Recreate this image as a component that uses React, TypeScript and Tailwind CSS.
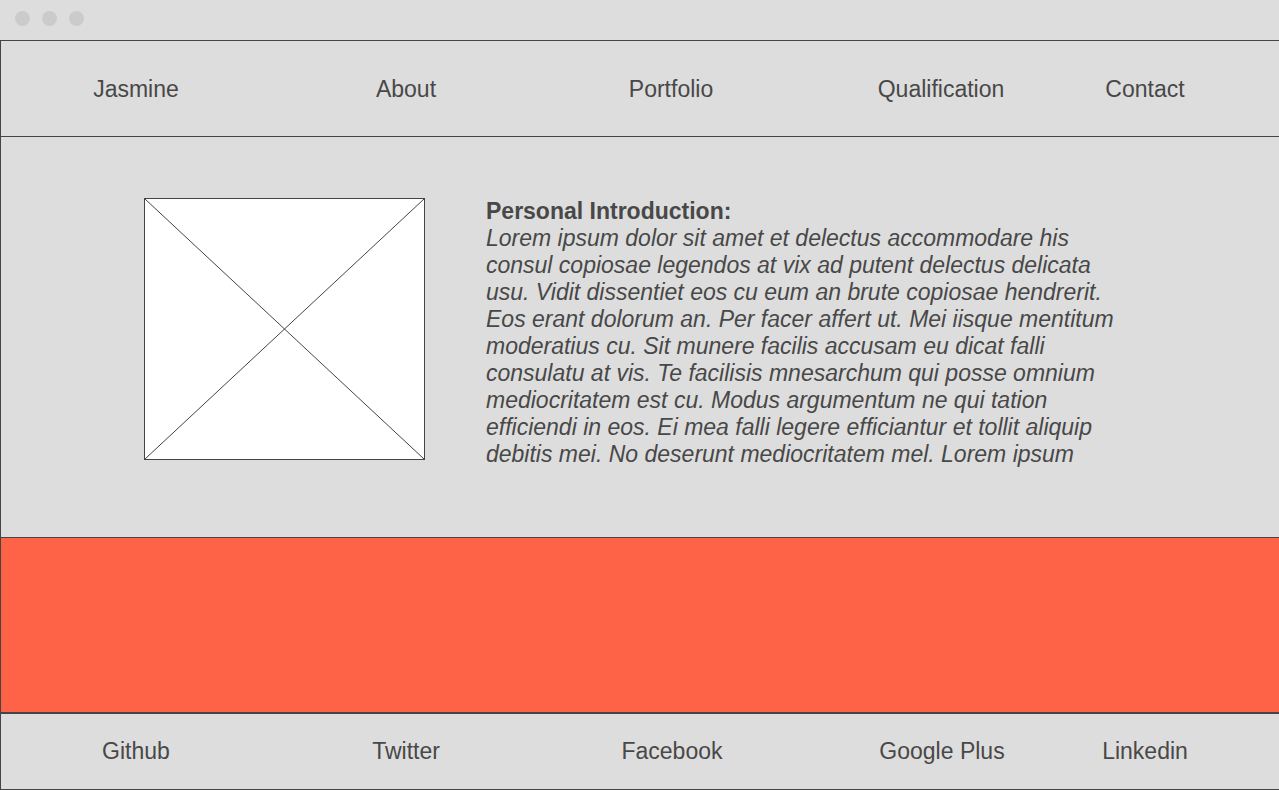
const navItems = [
  { label: 'Jasmine', w: 'w-[270px]' },
  { label: 'About', w: 'w-[270px]' },
  { label: 'Portfolio', w: 'w-[260px]' },
  { label: 'Qualification', w: 'w-[280px]' },
  { label: 'Contact', w: 'w-[128px]' },
]

const footerItems = [
  { label: 'Github', w: 'w-[270px]' },
  { label: 'Twitter', w: 'w-[270px]' },
  { label: 'Facebook', w: 'w-[262px]' },
  { label: 'Google Plus', w: 'w-[278px]' },
  { label: 'Linkedin', w: 'w-[128px]' },
]

function ImagePlaceholder() {
  return (
    <div className="w-[281px] h-[262px] shrink-0 border border-[#444] bg-white">
      <svg className="w-full h-full block" viewBox="0 0 279 260" preserveAspectRatio="none">
        <line x1="0" y1="0" x2="279" y2="260" stroke="#444" strokeWidth="1" />
        <line x1="279" y1="0" x2="0" y2="260" stroke="#444" strokeWidth="1" />
      </svg>
    </div>
  )
}

export default function App() {
  return (
    <div className="w-[1279px] h-[790px] bg-[#dddddd] flex flex-col text-[#484848] font-['Liberation_Sans',Arial,sans-serif] overflow-hidden">
      {/* window chrome */}
      <div className="h-10 shrink-0 flex items-start gap-[12px] pl-[15px] pt-[11px]">
        <span className="w-[15px] h-[15px] rounded-full bg-[#cbcbcb]" />
        <span className="w-[15px] h-[15px] rounded-full bg-[#cbcbcb]" />
        <span className="w-[15px] h-[15px] rounded-full bg-[#cbcbcb]" />
      </div>

      <div className="flex-1 flex flex-col border-t border-l border-b border-[#444] min-h-0">
        <nav className="h-[96px] shrink-0 flex items-center pt-[2px] border-b border-[#444] text-[23px]">
          {navItems.map((item) => (
            <div key={item.label} className={`${item.w} text-center`}>
              {item.label}
            </div>
          ))}
        </nav>

        <section className="h-[401px] shrink-0 border-b border-[#444] flex items-start pt-[61px] pl-[143px] gap-[61px]">
          <ImagePlaceholder />
          <div className="w-[640px] text-[23px] leading-[27px]">
            <p className="font-bold">Personal Introduction:</p>
            <p className="italic">
              Lorem ipsum dolor sit amet et delectus accommodare his consul copiosae legendos at vix ad putent
              delectus delicata usu. Vidit dissentiet eos cu eum an brute copiosae hendrerit. Eos erant dolorum
              an. Per facer affert ut. Mei iisque mentitum moderatius cu. Sit munere facilis accusam eu dicat
              falli consulatu at vis. Te facilisis mnesarchum qui posse omnium mediocritatem est cu. Modus
              argumentum ne qui tation efficiendi in eos. Ei mea falli legere efficiantur et tollit aliquip
              debitis mei. No deserunt mediocritatem mel. Lorem ipsum
            </p>
          </div>
        </section>

        <div className="h-[176px] shrink-0 bg-[#ff6347] border-b-2 border-[#444]" />

        <footer className="flex-1 flex items-center text-[23px]">
          {footerItems.map((item) => (
            <div key={item.label} className={`${item.w} text-center`}>
              {item.label}
            </div>
          ))}
        </footer>
      </div>
    </div>
  )
}
